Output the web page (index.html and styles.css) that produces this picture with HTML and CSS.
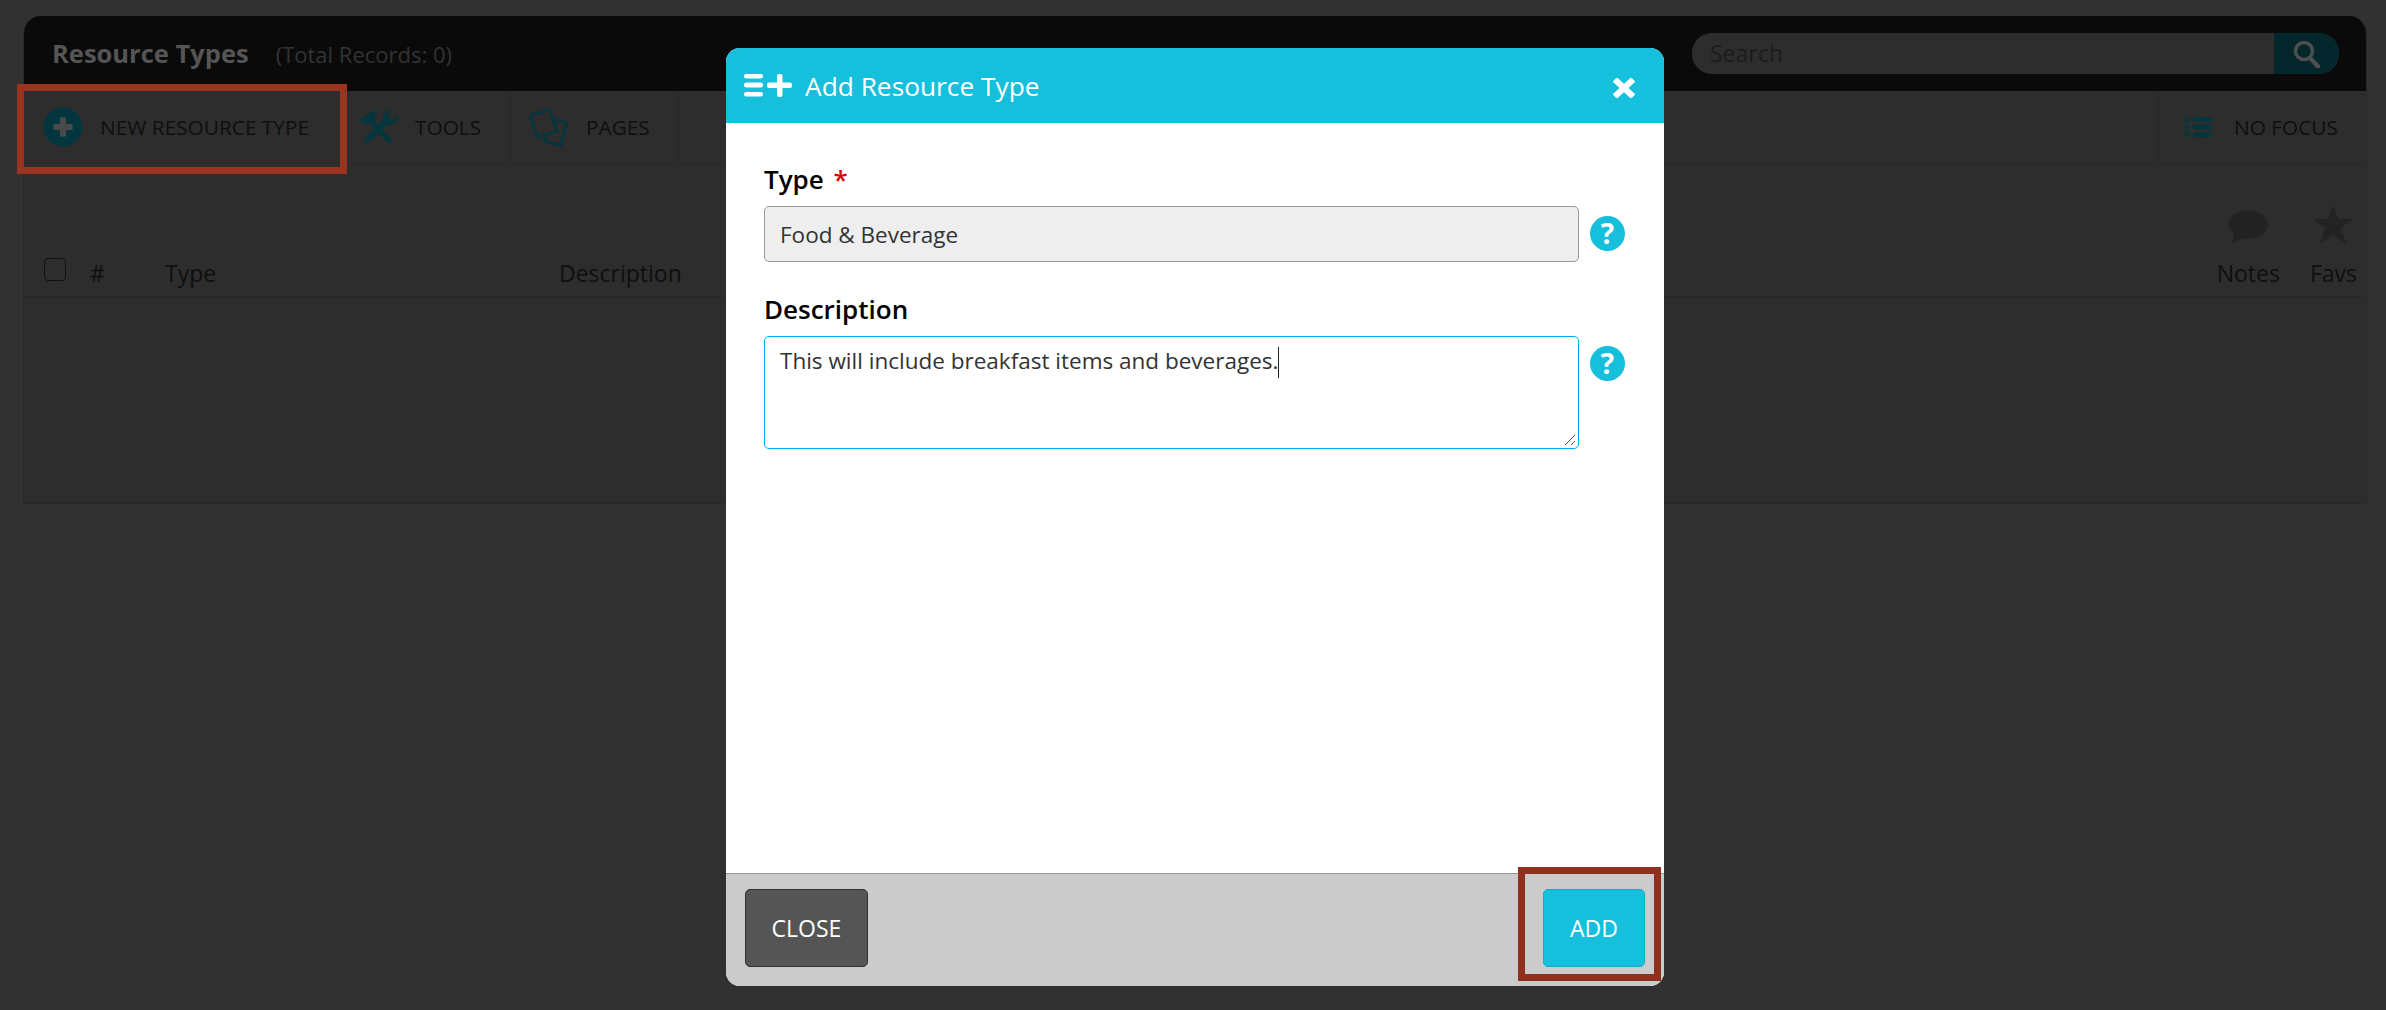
FILE: index.html
```html
<!DOCTYPE html>
<html lang="en">
<head>
<meta charset="utf-8">
<title>Resource Types</title>
<link rel="stylesheet" href="styles.css">
</head>
<body>
<main class="panel">
  <header class="panel-head">
    <div class="heading">
      <h1 class="title">Resource Types</h1>
      <span class="records">(Total Records: 0)</span>
    </div>
    <div class="search">
      <span class="search-text">Search</span>
      <span class="search-btn">
        <svg width="28" height="28" viewBox="0 0 28 28"><circle cx="11" cy="11" r="8.500" fill="none" stroke="#4f4f4f" stroke-width="3.500"/><path d="M17 18l8 8.500" stroke="#4f4f4f" stroke-width="4.500" stroke-linecap="round"/></svg>
      </span>
    </div>
  </header>
  <nav class="toolbar">
    <div class="tool tool-new">
      <svg class="tool-icon" width="40" height="40" viewBox="0 0 40 40"><circle cx="20" cy="20" r="19.500" fill="#03363f"/><path d="M20 10.500v19M10.500 20h19" stroke="#4a4a4a" stroke-width="6"/></svg>
      <span>NEW RESOURCE TYPE</span>
    </div>
    <div class="tool tool-tools">
      <svg class="tool-icon" width="40" height="34" viewBox="0 0 40 34"><g fill="#03363f"><path d="M0 11l2-3 2 1 6-5 5-3 7-1-4 3-2 4 2 4-4 4-3-2-4 2-3-3z"/><path d="M13 15l3.500-3.500L33.500 29c1 1 .5 2.300-.5 3.300-1 1-2.300 1.200-3.300.2z"/><path d="M35 0c-6-.5-11 4-10 10L7 28c-1.200 1.200-.8 2.800.2 3.800 1 1 2.600 1.400 3.800.2l18-17c5 1 11-3 11-10l-5 5-4-1-1-4z"/></g></svg>
      <span>TOOLS</span>
    </div>
    <div class="tool tool-pages">
      <svg class="tool-icon" width="39" height="39" viewBox="0 0 39 39"><g fill="none" stroke="#03363f" stroke-width="2.800" stroke-linejoin="round"><path d="M1.500 7.500L20.500 1.500 28 23 8 29.500z"/><path d="M24 11l13.500 4L31.500 37.500 15.500 33l1.500-4.500"/></g></svg>
      <span>PAGES</span>
    </div>
    <div class="tool tool-focus">
      <svg class="tool-icon" width="28" height="20" viewBox="0 0 28 20"><g fill="#03363f"><circle cx="3" cy="2.500" r="2.500"/><circle cx="3" cy="10" r="2.500"/><circle cx="3" cy="17.500" r="2.500"/><rect x="9" y="0" width="19" height="4.500" rx="1.500"/><rect x="9" y="7.750" width="19" height="4.500" rx="1.500"/><rect x="9" y="15.500" width="19" height="4.500" rx="1.500"/></g></svg>
      <span>NO FOCUS</span>
    </div>
  </nav>
  <section class="table">
    <div class="table-head">
      <span class="check"></span>
      <span class="col col-num">#</span>
      <span class="col col-type">Type</span>
      <span class="col col-desc">Description</span>
      <div class="col-icon col-notes">
        <svg width="40" height="34" viewBox="0 0 40 34"><path d="M20 0c11 0 20 6.500 20 14.500S31 29 20 29c-2 0-4 0-5.500-.500L4 34l2-10.500C2.500 21 0 18 0 14.500 0 6.500 9 0 20 0z" fill="#232323"/></svg>
        <span>Notes</span>
      </div>
      <div class="col-icon col-favs">
        <svg width="40" height="39" viewBox="0 0 40 39"><path d="M20 0l5 14h15L28 23l5 16-13-9-13 9 5-16L0 14h15z" fill="#232323"/></svg>
        <span>Favs</span>
      </div>
    </div>
  </section>
</main>

<div class="annot annot-new"></div>

<div class="modal">
  <div class="modal-head">
    <svg class="modal-icon" width="48" height="23" viewBox="0 0 48 23"><g fill="#fff"><rect x="0" y="0" width="19" height="4.500" rx="2.200"/><rect x="0" y="8.500" width="19" height="5" rx="2.500"/><rect x="0" y="18" width="19" height="4.500" rx="2.200"/><rect x="23" y="8.500" width="25" height="5.500" rx="2"/><rect x="33" y="0" width="5.500" height="23" rx="2"/></g></svg>
    <h2 class="modal-title">Add Resource Type</h2>
    <svg class="modal-x" width="22" height="20" viewBox="0 0 22 20"><path d="M4 3.500l14 13M18 3.500l-14 13" stroke="#fff" stroke-width="6" stroke-linecap="square"/></svg>
  </div>
  <form class="modal-body">
    <div class="field">
      <div class="label">Type <span class="req">*</span></div>
      <div class="field-row">
        <div class="input">Food &amp; Beverage</div>
        <span class="help">?</span>
      </div>
    </div>
    <div class="field">
      <div class="label">Description</div>
      <div class="field-row">
        <div class="textarea">
          <span>This will include breakfast items and beverages.</span><span class="caret"></span>
          <svg class="grip" width="12" height="12" viewBox="0 0 12 12"><path d="M1 11L11 1M7 11l4-4" stroke="#555" stroke-width="1"/></svg>
        </div>
        <span class="help">?</span>
      </div>
    </div>
  </form>
  <div class="modal-foot">
    <span class="btn btn-close">CLOSE</span>
    <span class="btn btn-add">ADD</span>
  </div>
</div>

<div class="annot annot-add"></div>
</body>
</html>
```
FILE: styles.css
```css
* { box-sizing: border-box; }
html, body { margin: 0; height: 100%; }
body {
  background: #313131;
  font-family: "Open Sans", "Liberation Sans", sans-serif;
  color: #0f0f0f;
  overflow: hidden;
  position: relative;
}
.panel {
  margin: 16px 19px 0 23px;
  height: 488px;
  background: #2d2d2d;
  border: solid #282828;
  border-width: 0 1px 1px 1px;
  border-radius: 18px 18px 0 0;
  overflow: hidden;
}
.panel-head {
  height: 75px;
  margin: 0 -1px;
  background: #0a0a0a;
  display: flex;
  align-items: flex-start;
  justify-content: space-between;
  padding: 17px 28px 0 29px;
}
.heading { display: flex; align-items: baseline; gap: 27px; padding-top: 3px; }
.title { margin: 0; font-size: 25.500px; font-weight: 700; color: #555555; line-height: 34px; }
.records { font-size: 22px; color: #333; }
.search {
  width: 647px;
  height: 41px;
  background: #2d2d2d;
  border-radius: 20px;
  display: flex;
  justify-content: space-between;
  overflow: hidden;
}
.search-text { font-size: 23px; color: #1c1c1c; padding-left: 18px; line-height: 41px; }
.search-btn { width: 65px; background: #03272d; display: flex; align-items: center; justify-content: center; }
.toolbar { height: 73px; display: flex; border-bottom: 1px solid #282828; }
.tool {
  display: flex;
  align-items: center;
  font-size: 20.800px;
  font-weight: 500;
  color: #0f0f0f;
  border-right: 1px solid #282828;
}
.tool-new { width: 323px; padding-left: 19px; gap: 17px; }
.tool-tools { width: 164px; padding-left: 11px; gap: 17px; }
.tool-pages { width: 168px; padding-left: 18px; gap: 18px; }
.tool-focus { margin-left: auto; width: 208px; padding-left: 25px; gap: 22px; border-right: 0; border-left: 1px solid #282828; }
.table-head {
  height: 133px;
  border-bottom: 1px solid #282828;
  display: flex;
  align-items: flex-end;
  padding: 0 9px 0 20px;
}
.check {
  width: 22px;
  height: 23px;
  border: 1.500px solid #111;
  border-radius: 4px;
  margin-bottom: 15px;
}
.col { font-size: 23px; line-height: 31px; padding-bottom: 7px; color: #0f0f0f; }
.col-num { margin-left: 24px; width: 75px; }
.col-type { width: 394px; }
.col-desc { flex: 1; }
.col-icon { display: flex; flex-direction: column; align-items: center; font-size: 23px; line-height: 31px; padding-bottom: 7px; gap: 14px; }
.col-notes { margin-right: 30px; }
.annot {
  position: absolute;
  border: 7px solid #9a3420;
}
.annot-new { left: 17px; top: 84px; width: 330px; height: 90px; }
.annot-add { left: 1518px; top: 867px; width: 143px; height: 114px; border-color: #90301f; }
.modal {
  position: absolute;
  left: 726px;
  top: 48px;
  width: 938px;
  height: 938px;
  background: #fff;
  border-radius: 14px;
  overflow: hidden;
  display: flex;
  flex-direction: column;
}
.modal-head {
  height: 75px;
  background: #16bfdb;
  display: flex;
  align-items: center;
  padding: 0 29px 0 18px;
  color: #fff;
}
.modal-icon { flex: none; margin-top: -1px; }
.modal-title { margin: 0 0 0 13px; font-size: 26.300px; font-weight: 400; flex: 1; }
.modal-x { margin-top: 4px; }
.modal-body { flex: 1; padding: 40px 25px 0 38px; color: #000; }
.field { margin-bottom: 31px; }
.label { font-size: 26px; font-weight: 600; line-height: 33px; color: #000; margin-bottom: 10px; }
.req { color: #e00000; margin-left: 3px; }
.field-row { display: flex; gap: 11px; }
.input {
  width: 815px;
  height: 56px;
  background: #eeeeee;
  border: 1px solid #999;
  border-radius: 5px;
  padding: 1px 0 0 15px;
  font-size: 22.500px;
  line-height: 54px;
  color: #333;
}
.textarea {
  width: 815px;
  height: 113px;
  border: 1px solid #00aeef;
  border-radius: 5px;
  padding: 8px 15px;
  font-size: 22.500px;
  line-height: 32px;
  color: #333;
  position: relative;
}
.caret { display: inline-block; width: 1px; height: 31px; background: #222; vertical-align: -9px; }
.grip { position: absolute; right: 2px; bottom: 2px; }
.help {
  width: 35px;
  height: 35px;
  margin-top: 10px;
  border-radius: 50%;
  background: #16bfdb;
  color: #fff;
  font-size: 28px;
  font-weight: 700;
  line-height: 35px;
  text-align: center;
  flex: none;
}
.modal-foot {
  height: 113px;
  background: #cbcbcb;
  border-top: 1px solid #999;
  display: flex;
  justify-content: space-between;
  align-items: flex-start;
  padding: 15px 19px 0 19px;
}
.btn {
  height: 78px;
  border-radius: 5px;
  color: #fff;
  font-size: 23px;
  line-height: 76px;
  text-align: center;
}
.btn-close { width: 123px; background: #555555; border: 1px solid #333; }
.btn-add { width: 102px; background: #16bfdb; border: 1px solid #13aac4; }
```
